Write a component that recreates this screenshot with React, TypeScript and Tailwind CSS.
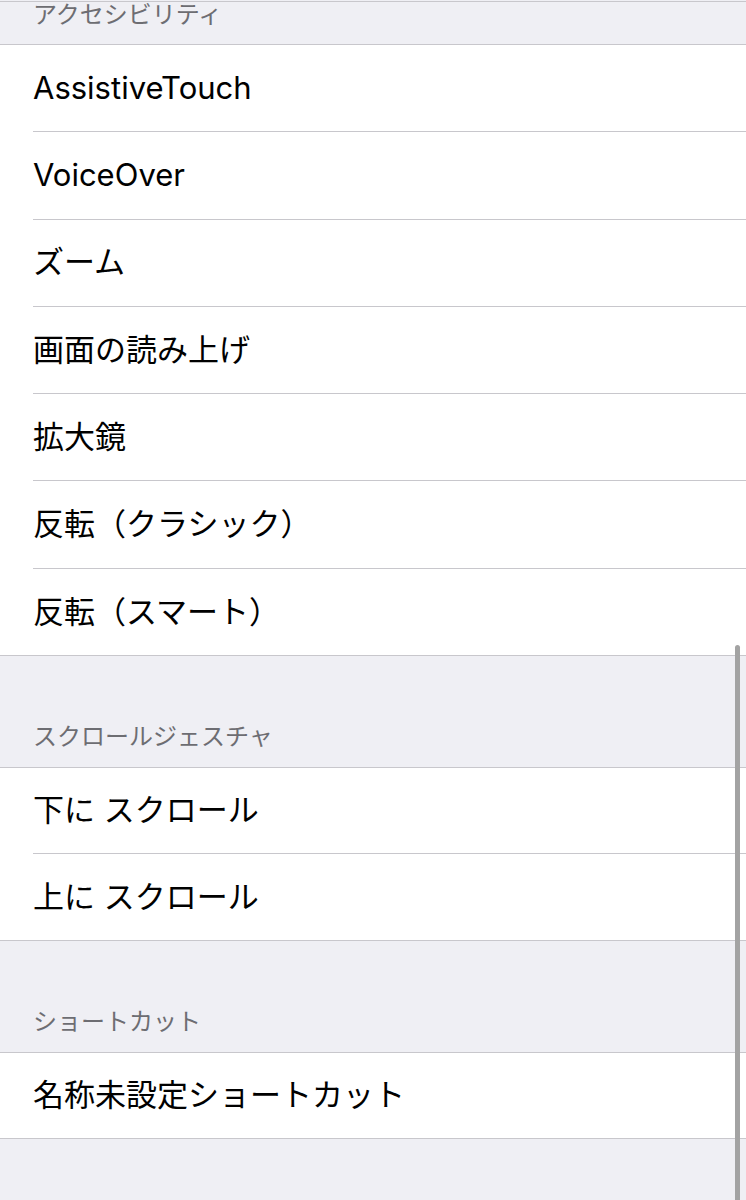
const font = { fontFamily: '"Inter", "Noto Sans CJK JP", sans-serif' };

type Section = { title: string; items: string[]; gap: boolean };

const sections: Section[] = [
  {
    title: 'アクセシビリティ',
    gap: false,
    items: [
      'AssistiveTouch',
      'VoiceOver',
      'ズーム',
      '画面の読み上げ',
      '拡大鏡',
      '反転（クラシック）',
      '反転（スマート）',
    ],
  },
  { title: 'スクロールジェスチャ', gap: true, items: ['下に スクロール', '上に スクロール'] },
  { title: 'ショートカット', gap: true, items: ['名称未設定ショートカット'] },
];

export default function App() {
  return (
    <div className="relative w-[746px] h-[1200px] overflow-hidden bg-[#efeff4]" style={font}>
      <div className="h-px mt-px bg-[#c8c7cc]" />
      {sections.map((s) => (
        <div key={s.title}>
          <div
            className={`flex items-end px-[33px] pb-[14px] text-[24px] leading-[30px] text-[#6d6d72] ${
              s.gap ? 'h-[111px] pb-[15px]' : 'h-[42px]'
            }`}
          >
            {s.title}
          </div>
          <div className="bg-white border-y border-[#c8c7cc]">
            {s.items.map((item, i) => {
              const last = i === s.items.length - 1;
              return (
                <div key={item} className="pl-[33px]">
                  <div
                    className={`flex items-center text-[31px] text-black ${
                      last ? '' : 'border-b border-[#c8c7cc]'
                    } ${
                      s.gap
                        ? last
                          ? 'h-[85.5px]'
                          : 'h-[86px]'
                        : last
                          ? 'h-[86.3px]'
                          : 'h-[87.3px]'
                    }`}
                  >
                    {item}
                  </div>
                </div>
              );
            })}
          </div>
        </div>
      ))}
      {/* scroll indicator */}
      <div className="absolute right-[6px] top-[645px] w-[5px] h-[600px] rounded-full bg-[#a3a3a3]" />
    </div>
  );
}
